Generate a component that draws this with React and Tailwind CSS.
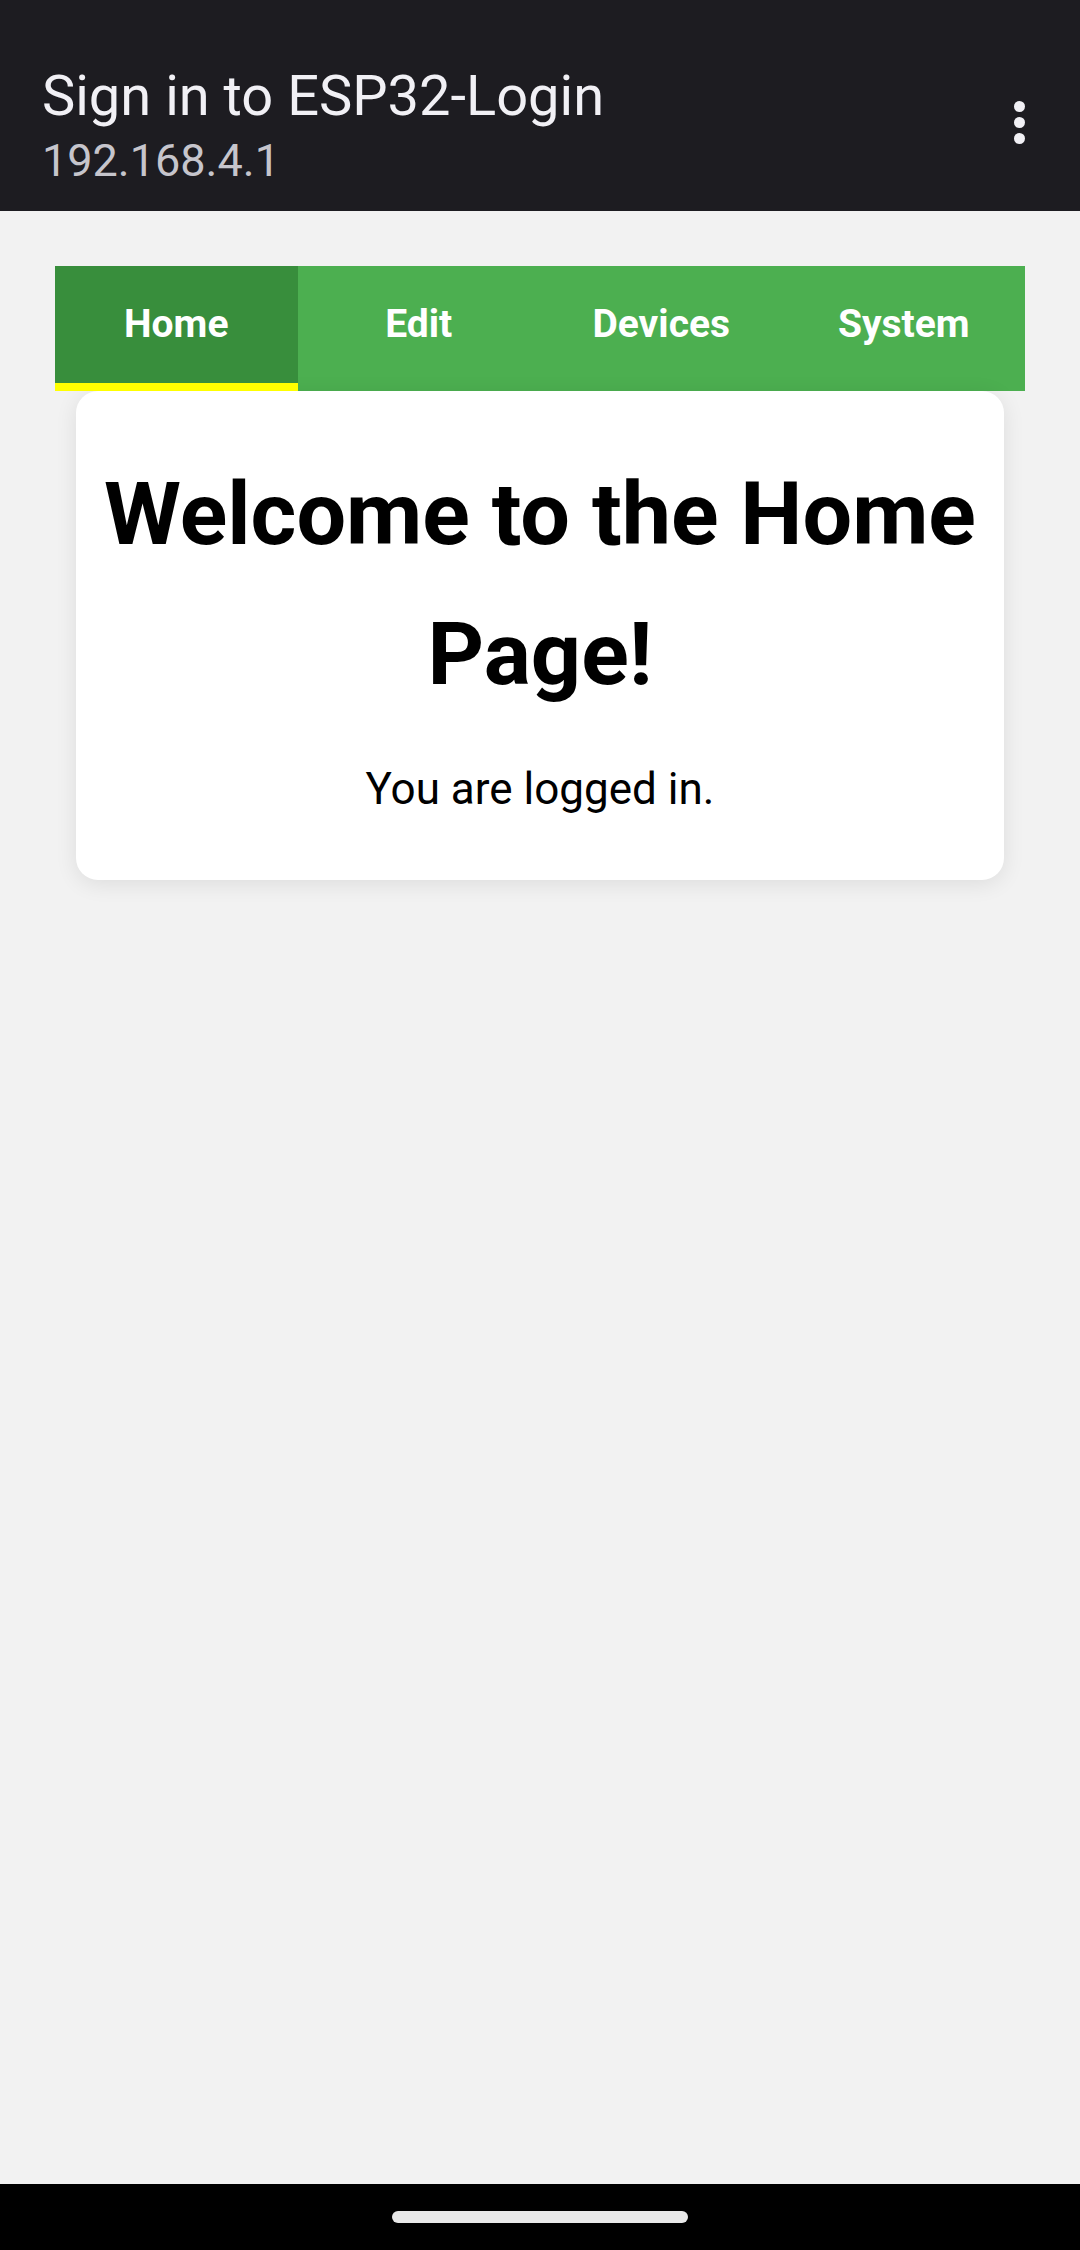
export default function App() {
    const tabs = ["Home", "Edit", "Devices", "System"];
    return (
        <div className="min-h-screen flex flex-col bg-[#f2f2f2]" style={{ fontFamily: "Roboto, 'Noto Sans', sans-serif" }}>
            {/* browser top bar */}
            <div className="h-[211px] bg-[#1d1c21] flex items-start justify-between pl-[42px] pr-[55px] pt-[63px]">
                <div className="flex flex-col gap-[5px]">
                    <h1 className="text-[56px] leading-[66px] text-[#f1f0f5]">Sign in to ESP32-Login</h1>
                    <p className="text-[45px] leading-[54px] text-[#c6c5cc]">192.168.4.1</p>
                </div>
                <div className="flex flex-col items-center gap-[5px] mt-[38px]">
                    <span className="w-[11px] h-[11px] rounded-full bg-[#f1f0f5]"></span>
                    <span className="w-[11px] h-[11px] rounded-full bg-[#f1f0f5]"></span>
                    <span className="w-[11px] h-[11px] rounded-full bg-[#f1f0f5]"></span>
                </div>
            </div>

            {/* page */}
            <div className="flex-1 px-[55px] pt-[55px]">
                <nav className="flex bg-[#4caf50]">
                    {tabs.map((t, i) => (
                        <div
                            key={t}
                            className={
                                i === 0
                                    ? "flex-1 h-[125px] flex items-center justify-center bg-[#388e3c] border-b-[8px] border-[#ffff00] text-white font-bold text-[39px]"
                                    : "flex-1 h-[125px] flex items-center justify-center border-b-[8px] border-transparent text-white font-bold text-[39px]"
                            }
                        >
                            {t}
                        </div>
                    ))}
                </nav>
                <div className="mx-[21px] bg-white rounded-[22px] shadow-[0_4px_22px_rgba(0,0,0,0.09)] pt-[53px] pb-[56px] px-[20px] text-center">
                    <h2 className="text-[88px] leading-[140px] font-bold text-black">Welcome to the Home Page!</h2>
                    <p className="mt-[30px] text-[44px] leading-[70px] text-black">You are logged in.</p>
                </div>
            </div>

            {/* gesture bar */}
            <div className="h-[66px] bg-black flex items-center justify-center">
                <div className="w-[296px] h-[12px] rounded-full bg-[#e9e9e9]"></div>
            </div>
        </div>
    );
}
